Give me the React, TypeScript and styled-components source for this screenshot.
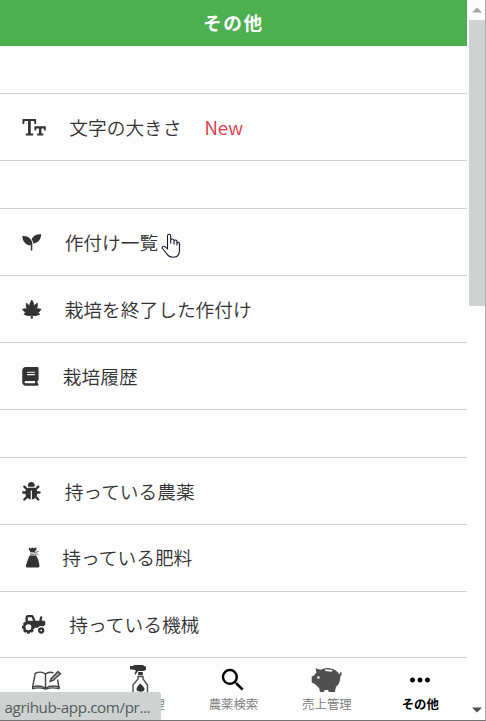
import React from "react";
import styled, { createGlobalStyle } from "styled-components";
import { FaBook, FaBug, FaTractor } from "react-icons/fa6";
import { MdSearch, MdMoreHoriz } from "react-icons/md";

const GlobalStyle = createGlobalStyle`
  * { box-sizing: border-box; }
  html, body { margin: 0; overflow: hidden; background: #fdfdfd; }
  body { font-family: "Noto Sans CJK JP", "Noto Sans", sans-serif; font-weight: 350; color: #333; }
`;

const Window = styled.div`
  position: relative;
  display: flex;
  width: 486px;
  height: 721px;
  background: #fdfdfd;
  border-right: 1px solid #a9a9a9;
  border-bottom: 1px solid #737373;
  overflow: hidden;
`;

const Screen = styled.div`
  display: flex;
  flex-direction: column;
  width: 467px;
  height: 720px;
`;

const Header = styled.header`
  display: flex;
  align-items: center;
  justify-content: center;
  flex: none;
  height: 46px;
  padding-bottom: 3px;
  background: #4caf50;
  color: #fff;
  font-size: 18.67px;
  font-weight: 700;
  letter-spacing: 1.6px;
`;

const List = styled.main`
  flex: 1;
  min-height: 0;
  overflow: hidden;
`;

const Spacer = styled.div`
  height: 48px;
  border-bottom: 1px solid #ced2d1;
`;

const Row = styled.a<{ $raised?: boolean }>`
  display: flex;
  align-items: center;
  gap: 24px;
  height: 67px;
  padding-left: 22px;
  padding-bottom: ${(p) => (p.$raised ? 2 : 0)}px;
  border-bottom: 1px solid #ced2d1;
  font-size: 18.72px;
  line-height: 28px;
  white-space: nowrap;
`;

const RowIcon = styled.span<{ $width: number }>`
  display: flex;
  flex: none;
  width: ${(p) => p.$width}px;
  height: 20px;
  align-items: center;
  justify-content: center;

  svg { display: block; flex: none; width: ${(p) => p.$width}px; height: 18.67px; overflow: visible; }
`;

const NewTag = styled.span`
  margin-left: -1px;
  color: #dc3545;
  letter-spacing: -0.1px;
`;

const Nav = styled.nav`
  display: grid;
  grid-template-columns: repeat(5, 1fr);
  flex: none;
  height: 63px;
  border-top: 1px solid #ced2d1;
`;

const Tab = styled.a<{ $active?: boolean }>`
  display: flex;
  flex-direction: column;
  align-items: center;
  padding-top: 6px;
  font-size: 12.4px;
  line-height: 16px;
  color: ${(p) => (p.$active ? "#000" : "#777")};
  font-weight: ${(p) => (p.$active ? 700 : 350)};
`;

const TabIcon = styled.span`
  display: flex;
  align-items: center;
  justify-content: center;
  height: 32px;
`;

const Scrollbar = styled.div`
  display: flex;
  flex-direction: column;
  align-items: center;
  width: 16px;
  margin-left: 2px;
  height: 720px;
`;

const Arrow = styled.div<{ $down?: boolean }>`
  display: flex;
  align-items: center;
  justify-content: center;
  height: 20px;
  color: ${(p) => (p.$down ? "#505050" : "#a5a5a5")};
  svg { display: block; transform: ${(p) => (p.$down ? "rotate(180deg)" : "none")}; }
`;

const Thumb = styled.div`
  width: 16px;
  height: 286px;
  background: #ced2d1;
`;

const Track = styled.div`
  flex: 1;
`;

const Status = styled.div`
  position: absolute;
  left: 0;
  bottom: 0;
  width: 161px;
  height: 28px;
  padding-left: 4.5px;
  background: #ced2d1;
  border-top-right-radius: 3px;
  color: #555b5c;
  font: 15.2px/31px "Open Sans", "Noto Sans", sans-serif;
  letter-spacing: -0.4px;
  white-space: nowrap;
`;

const Pointer = styled.svg`
  position: absolute;
  left: 161px;
  top: 233px;
`;

const TextSizeIcon = () => (
  <svg viewBox="0 0 24 19" fill="currentColor">
    <path d="M.5 1H14.5V6H12.8L12.3 3H9V15.8H11.5V18H3.9V15.8H6.2V3H2.7L2.2 6H.5Z" />
    <path d="M12.8 8.5H24.5V12.8H22.9L22.5 10.7H20V15.9H21.9V18H15.6V15.9H17.5V10.7H14.8L14.4 12.8H12.8Z" />
  </svg>
);

const SproutIcon = () => (
  <svg viewBox="0 0 19 19" fill="currentColor">
    <path d="M.3 3.2C6.1 2.7 10 6 10.5 10.7V17.6Q9.7 18.4 9 17.6V12.6C4.1 12.3.6 8.8.3 3.2Z" />
    <path d="M19.5 1.2C19.5 6.5 16.1 10.2 11.5 10.6Q11.1 8 9.8 6.4C11.1 3 14.8 1 19.5 1.2Z" />
  </svg>
);

const LeafIcon = () => (
  <svg viewBox="-.5 0 19 19" fill="currentColor">
    <path d="M9.5 0Q11.5 2.7 11.8 6.4Q13 4.2 15.1 3.2Q15.5 6.3 14.4 9.2Q16.6 8.5 19 9.5Q17.5 12 15.3 13.2Q16.8 13.6 17.6 14.5Q14.2 16.6 10.1 15.6V18.7H8.9V15.6Q4.8 16.6 1.4 14.5Q2.2 13.6 3.7 13.2Q1.5 12 0 9.5Q2.4 8.5 4.6 9.2Q3.5 6.3 3.9 3.2Q6 4.2 7.2 6.4Q7.5 2.7 9.5 0Z" strokeWidth=".8" stroke="currentColor" strokeLinejoin="round" />
  </svg>
);

const SackIcon = () => (
  <svg viewBox="0 0 16.3 20" fill="currentColor">
    <path d="M6.8-.8L8.8.6L10.7-.6L12 .3L14.8-.8V2.2L12.8 4.2H8.5L6.8 1.7Z" />
    <path d="M8 5.4L13.5 5L17.5 3.3M8 7.2L14.5 6.7L15.5 6L17.5 8" fill="none" stroke="currentColor" strokeWidth=".7" />
    <path d="M7.5 8H14.7L16.9 12.5L18.2 19L17.5 20.8H4.2L3.5 19L5.6 12.5Z" />
  </svg>
);

const DiaryIcon = () => (
  <svg width="30" height="22" viewBox="1 -1 30 22" fill="none" stroke="#444" strokeWidth="1.4">
    <path d="M14.5 4Q10 .6 4.2 3.5L1.6 17Q8 14.5 14.5 18Q21 14.5 28 17L26.5 9.5M14.5 4Q18 1.2 22.5 2.8M14.5 4V18" />
    <path d="M1.6 17V18.6Q8 17 14.5 19Q21 17 28 18.6V17" />
    <path d="M19 11.5L20.3 8.5L27 1.6L29.4 3.8L22.2 10.5Z" fill="#aaa" />
  </svg>
);

const SprayIcon = () => (
  <svg width="20" height="31" viewBox="1 0 20 31" fill="#333">
    <path d="M1 1L4 1L5 0H14L17 2V5L14 6H9L6.5 9.5L5.4 9L7 5.6L4 4.5H1Z" />
    <path d="M9.2 7H13.8V10.2H9.2Z" />
    <path d="M9 11.5H14V14L18.5 20V29H4V20L9 14Z" fill="#fdfdfd" stroke="#555" strokeWidth="1.5" />
    <path d="M11.2 18.5Q15.5 22 15.5 24Q15.5 26.8 11.5 26.8Q7.5 26.8 7.5 24Q7.5 22 11.2 18.5Z" />
  </svg>
);

const PigIcon = () => (
  <svg width="31" height="26" viewBox="0 0 31 26" fill="#505050">
    <path fillRule="evenodd" d="M4.6 1.2L9.3 2.8Q18-1.2 25 3.6Q27 5.2 28.2 7.2Q29.7 7 28.9 5L30.6 5.8Q31 8.8 29.2 9.5Q29.6 16.5 25 19.8L23.8 25H17.8L17.1 22.9H13.5L13 25H9L8.2 21.2L4 16.9L.7 15.4V9.6L3.1 8.6L5.4 5.5ZM14.2 2.2V4L21.2 4.7V2.9ZM7.4 9.2A1.3 1.3 0 1 0 7.4 11.8A1.3 1.3 0 1 0 7.4 9.2Z" />
  </svg>
);

const Triangle = () => (
  <svg width="10" height="6" viewBox="0 0 10 6" fill="currentColor">
    <path d="M0 5.5H10L5 .5Z" />
  </svg>
);

const icons = {
  text: <TextSizeIcon />,
  seed: <SproutIcon />,
  leaf: <LeafIcon />,
  book: <FaBook />,
  bug: <FaBug />,
  sack: <SackIcon />,
  tractor: <FaTractor />,
};

type Item = { icon: keyof typeof icons; width: number; label: string; isNew?: boolean; raised?: boolean };

const groups: Item[][] = [
  [{ icon: "text", width: 23.3, label: "文字の大きさ", isNew: true }],
  [
    { icon: "seed", width: 18.67, label: "作付け一覧" },
    { icon: "leaf", width: 18.67, label: "栽培を終了した作付け" },
    { icon: "book", width: 16.8, label: "栽培履歴" },
  ],
  [
    { icon: "bug", width: 18.67, label: "持っている農薬" },
    { icon: "sack", width: 16.3, label: "持っている肥料", raised: true },
    { icon: "tractor", width: 23.3, label: "持っている機械", raised: true },
  ],
];

const tabs = [
  { label: "栽培記録", icon: <DiaryIcon /> },
  { label: "農薬管理", icon: <SprayIcon /> },
  { label: "農薬検索", icon: <MdSearch size={30} color="#000" /> },
  { label: "売上管理", icon: <PigIcon /> },
  { label: "その他", icon: <MdMoreHoriz size={30} color="#000" />, active: true },
];

export default function App() {
  return (
    <>
      <GlobalStyle />
      <Window>
        <Screen>
          <Header>その他</Header>
          <List>
            {groups.map((items, i) => (
              <React.Fragment key={i}>
                <Spacer />
                {items.map((item) => (
                  <Row key={item.label} $raised={item.raised}>
                    <RowIcon $width={item.width}>{icons[item.icon]}</RowIcon>
                    <span>{item.label}</span>
                    {item.isNew && <NewTag>New</NewTag>}
                  </Row>
                ))}
              </React.Fragment>
            ))}
          </List>
          <Nav>
            {tabs.map((tab) => (
              <Tab key={tab.label} $active={tab.active}>
                <TabIcon>{tab.icon}</TabIcon>
                <span>{tab.label}</span>
              </Tab>
            ))}
          </Nav>
        </Screen>
        <Scrollbar>
          <Arrow><Triangle /></Arrow>
          <Thumb />
          <Track />
          <Arrow $down><Triangle /></Arrow>
        </Scrollbar>
        <Status>agrihub-app.com/pr...</Status>
        <Pointer width="20" height="26" viewBox="0 0 20 26" fill="#fdfdfd" stroke="#15152a" strokeWidth="1.1" strokeLinejoin="round" strokeLinecap="round">
          <path d="M6.5 15V3Q6.5 1.3 8 1.3Q9.7 1.3 9.7 3V10V7.3Q9.7 6 11.2 6Q13 6 13 7.7V11V8.3Q13 7 14.5 7Q16 7 16 8.7V12V9.5Q18.5 8.5 18.5 11.5V17Q18.5 24.3 12 24.3Q7.8 24.3 5.2 20L1.4 15.5Q.8 13.5 2.7 13.2Q4 13 6.5 16" />
        </Pointer>
      </Window>
    </>
  );
}
